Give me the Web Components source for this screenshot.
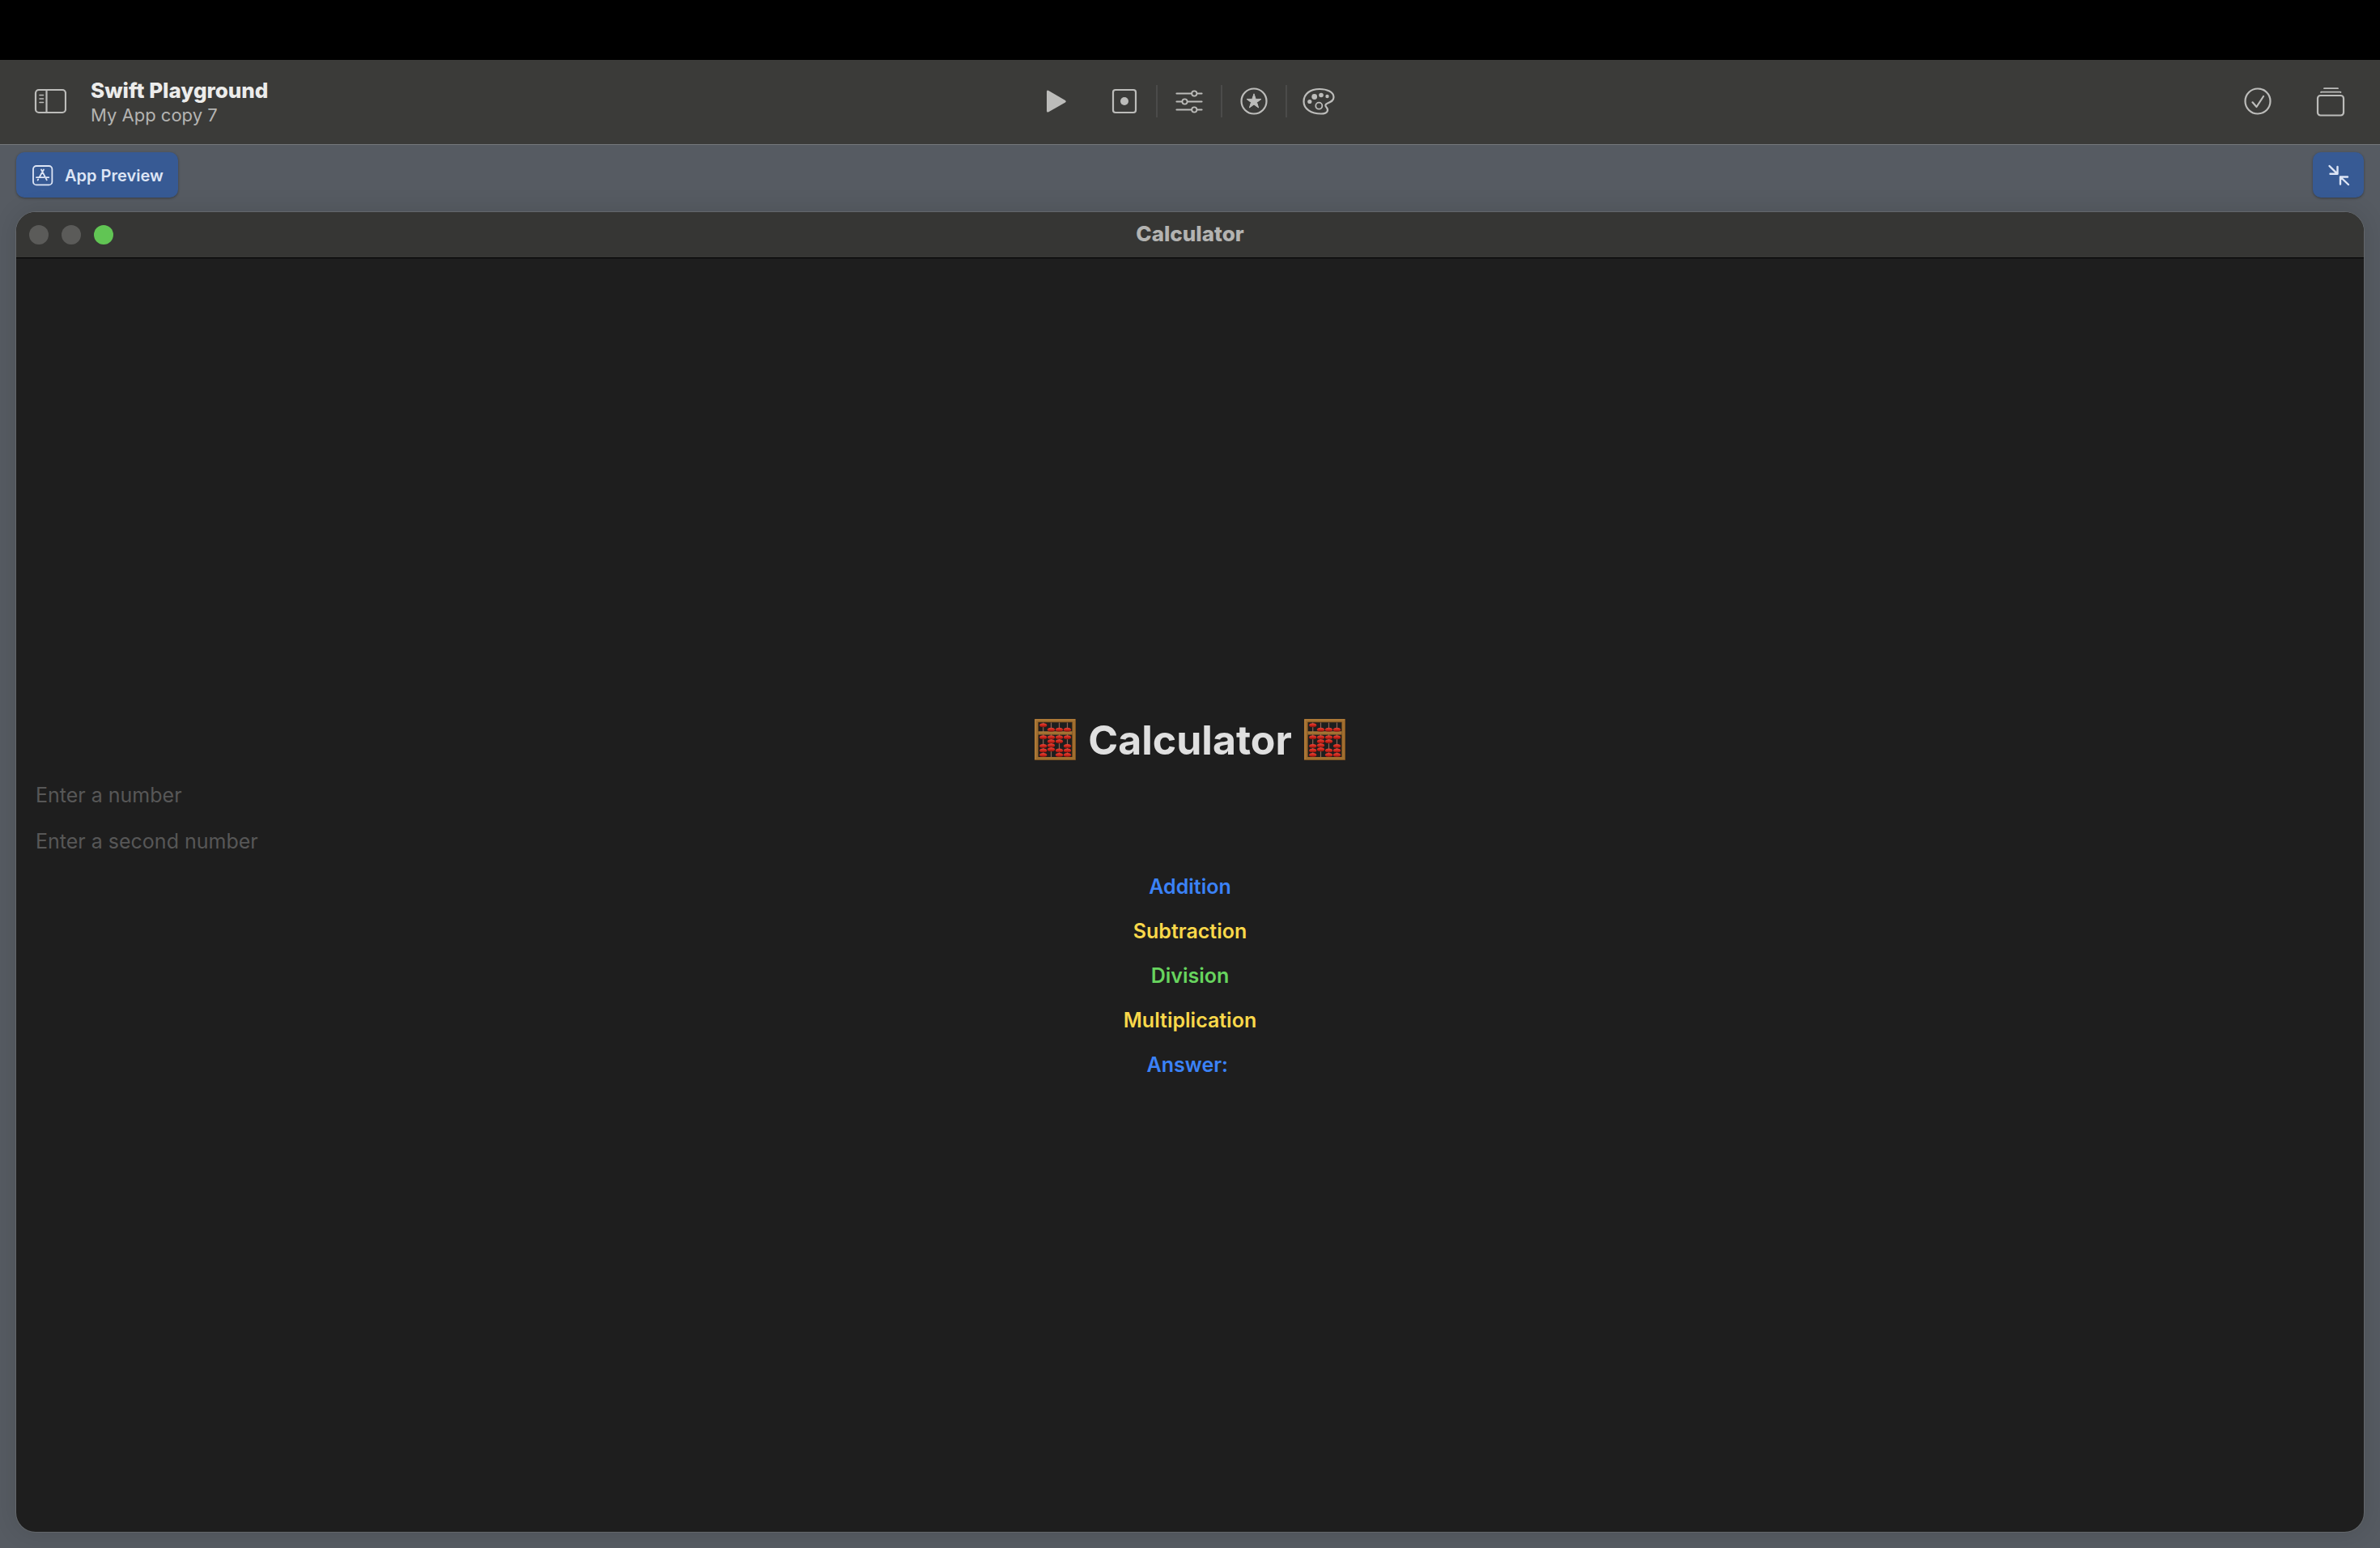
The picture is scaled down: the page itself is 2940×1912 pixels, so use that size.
<!DOCTYPE html>
<html lang="en">
<head>
<meta charset="utf-8">
<title>Swift Playground</title>
<style>
  html, body { margin: 0; background: #565b62; }
  body { font-family: Inter, "Liberation Sans", sans-serif; }
</style>
</head>
<body>
<playground-app></playground-app>

<template id="t-app">
  <style>
    :host { display: flex; flex-direction: column; min-height: 100vh; background: #565b62; }
    .menubar { height: 74px; background: #000; }
    app-window { flex: 1; margin: 0 20px 20px; }
  </style>
  <div class="menubar"></div>
  <app-toolbar heading="Swift Playground" subheading="My App copy 7"></app-toolbar>
  <preview-bar>App Preview</preview-bar>
  <app-window heading="Calculator"><calculator-view></calculator-view></app-window>
</template>

<template id="t-toolbar">
  <style>
    :host { display: grid; grid-template-columns: 1fr auto 1fr; align-items: center; height: 102px; padding-bottom: 2px; background: #3b3b39; border-bottom: 1px solid #75787b; color: #bcbcba; }
    .start { display: flex; align-items: center; gap: 11px; padding-left: 25px; }
    .end { display: flex; justify-content: flex-end; padding-right: 15px; }
    .titles { display: flex; flex-direction: column; }
    h1, p { margin: 0; }
    h1 { font-size: 26px; line-height: 34px; font-weight: 800; color: #ececeb; }
    p { font-size: 22px; line-height: 26px; color: #b4b4b2; }
    .tools { display: flex; }
    tool-button { width: 80px; }
    .start tool-button { width: 76px; }
    .end tool-button { width: 90px; }
    .ruled { --rule: #4b4b4a; }
  </style>
  <div class="start">
    <tool-button label="Toggle sidebar">
      <svg width="40" height="32" viewBox="0 0 40 32" fill="none" stroke="currentColor" stroke-width="2.200">
        <rect x="2" y="2" width="37" height="28" rx="4"/><path d="M15.500 2v28"/><path d="M7 8.500h4.500M7 13h4.500M7 17.500h4.500" stroke-width="1.600" stroke-linecap="round"/>
      </svg>
    </tool-button>
    <div class="titles"><h1></h1><p></p></div>
  </div>
  <div class="tools">
    <tool-button label="Run">
      <svg width="38" height="36" viewBox="0 0 38 36" fill="currentColor"><path d="M3 6.200Q3 3.800 5.400 5L26 17Q27.800 18.200 26 19.400L5.400 31.200Q3 32.400 3 30Z"/></svg>
    </tool-button>
    <tool-button class="ruled" label="Record">
      <svg width="36" height="36" viewBox="0 0 36 36"><rect x="4" y="4" width="28" height="28" rx="3" fill="none" stroke="currentColor" stroke-width="2.200"/><circle cx="18" cy="18" r="5" fill="currentColor"/></svg>
    </tool-button>
    <tool-button class="ruled" label="Settings">
      <svg width="36" height="36" viewBox="0 0 36 36" fill="none" stroke="currentColor" stroke-width="2.200" stroke-linecap="round">
        <path d="M2.500 8.500H21M28 8.500H33.500M2.500 18.500H9M16 18.500H33.500M2.500 28.500H21M28 28.500H33.500"/>
        <g stroke-width="1.800"><circle cx="24.300" cy="8.500" r="3.100"/><circle cx="12.500" cy="18.500" r="3.100"/><circle cx="24.300" cy="28.500" r="3.100"/></g>
      </svg>
    </tool-button>
    <tool-button class="ruled" label="Favourites">
      <svg width="36" height="36" viewBox="0 0 36 36"><circle cx="18" cy="18" r="15.500" fill="none" stroke="currentColor" stroke-width="2.200"/><path fill="currentColor" stroke="currentColor" stroke-linejoin="round" d="M18 8.800L20.200 15.400H27L21.500 19.400L23.600 26L18 22L12.400 26L14.500 19.400L9 15.400H15.800Z"/></svg>
    </tool-button>
    <tool-button label="Colours">
      <svg width="42" height="36" viewBox="0 0 42 36"><path fill="none" stroke="currentColor" stroke-width="2.200" d="M22 3C31 3 39.500 6.500 39.500 13C39.500 17.500 36 19 32 20.500C29 21.600 28.600 23.500 30.500 25.500C33 28.200 33.200 33.500 24 33.500C11.500 33.500 2.500 27.500 2.500 18.500C2.500 8.500 11 3 22 3Z"/><g fill="currentColor"><circle cx="9.800" cy="18.500" r="2.600"/><circle cx="15.700" cy="12.500" r="3.400"/><circle cx="24" cy="10.500" r="2.800"/><circle cx="31.500" cy="12" r="2.200"/></g><circle cx="21.300" cy="23.700" r="4" fill="none" stroke="currentColor" stroke-width="1.800"/></svg>
    </tool-button>
  </div>
  <div class="end">
    <tool-button label="Check">
      <svg width="36" height="36" viewBox="0 0 36 36" fill="none" stroke="currentColor" stroke-width="2.200" stroke-linecap="round" stroke-linejoin="round"><circle cx="18" cy="18" r="15.500"/><path d="M11.500 19.300L16.500 25L25 12"/></svg>
    </tool-button>
    <tool-button label="Library">
      <svg width="36" height="38" viewBox="0 0 36 38" fill="none" stroke="currentColor" stroke-width="2.200"><rect x="2" y="12" width="32" height="24.500" rx="3.500"/><path d="M6 8L6.500 7.600H30L30.500 8M10 3.200H27" stroke-linecap="round" stroke-width="1.800"/></svg>
    </tool-button>
  </div>
</template>

<template id="t-tool">
  <style>
    :host { display: block; }
    button { box-sizing: border-box; display: flex; align-items: center; justify-content: center; width: 100%; height: 40px; margin: 0; padding: 0; border: 0; border-right: 2px solid var(--rule, transparent); background: none; color: inherit; }
    ::slotted(svg) { display: block; flex: none; }
  </style>
  <button><slot></slot></button>
</template>

<template id="t-preview">
  <style>
    :host { display: flex; justify-content: space-between; padding: 9px 20px 18px; }
    button { display: flex; align-items: center; justify-content: center; gap: 14px; height: 56px; margin: 0; border: 0; border-radius: 10px; background: #375a94; color: #dde5f5; font: 600 20px/28px Inter, "Liberation Sans", sans-serif; box-shadow: 0 1px 3px rgba(0, 0, 0, .35); }
    .label { padding: 2px 18px 0 19px; }
    .shrink { width: 63px; padding: 0; }
    svg { display: block; }
  </style>
  <button class="label">
    <svg width="27" height="27" viewBox="0 0 27 27" fill="none" stroke="currentColor" stroke-width="1.800" stroke-linecap="round"><rect x="2" y="1" width="23.400" height="23.400" rx="4"/><path d="M12 5.500L18.800 18.300M15 5.500L9.600 15M6 15.200H15.200M18.400 15.200H21.200M8.200 17.500L7.600 18.500"/></svg>
    <span><slot></slot></span>
  </button>
  <button class="shrink" aria-label="Exit full screen">
    <svg width="28" height="28" viewBox="0 0 28 28" fill="none" stroke="currentColor" stroke-width="2.400" stroke-linecap="round" stroke-linejoin="round"><path d="M2.500 3L12.500 12.800M12.500 4V12.800H3.500M26 26L16 16.500M16 25.500V16.500H25"/></svg>
  </button>
</template>

<template id="t-window">
  <style>
    :host { display: flex; flex-direction: column; overflow: hidden; border-radius: 24px; background: #1e1e1e; box-shadow: 0 0 0 1px #63676b, 0 0 30px rgba(0, 0, 0, .12); }
    header { display: grid; grid-template-columns: 1fr auto 1fr; align-items: center; height: 56px; padding: 0 16px; background: #363634; border-bottom: 1px solid #000; }
    .lights { display: flex; gap: 16px; }
    button { width: 24px; height: 24px; padding: 0; border: 0; border-radius: 50%; background: #5b5b59; }
    .zoom { background: #61c554; }
    h2 { margin: 0; padding-bottom: 2px; font-size: 26px; line-height: 32px; font-weight: 800; color: #b3b3b1; }
    ::slotted(*) { flex: 1; }
  </style>
  <header>
    <div class="lights"><button aria-label="Close"></button><button aria-label="Minimise"></button><button class="zoom" aria-label="Zoom"></button></div>
    <h2></h2>
  </header>
  <slot></slot>
</template>

<template id="t-calculator">
  <style>
    :host { display: flex; flex-direction: column; justify-content: center; align-items: center; gap: 16px; padding: 5px 24px 0; font-size: 25px; line-height: 39px; }
    h1 { display: flex; align-items: center; gap: 15px; margin: 0; font-size: 50px; line-height: 64px; font-weight: 700; color: #dfdfdf; }
    input { box-sizing: border-box; width: 100%; height: 41px; margin: 0; padding: 0; border: 0; outline: 0; background: none; color: #dfdfdf; font: inherit; }
    input::placeholder { color: #575757; opacity: 1; }
    button, output { margin: 0; padding: 0; border: 0; background: none; font: inherit; font-weight: 600; white-space: pre; }
    .blue { color: #3b82f7; }
    .yellow { color: #f9d84a; }
    .green { color: #67d45e; }
  </style>
  <h1><abacus-icon></abacus-icon><span>Calculator</span><abacus-icon></abacus-icon></h1>
  <input type="text" aria-label="Enter a number" placeholder="Enter a number">
  <input type="text" aria-label="Enter a second number" placeholder="Enter a second number">
  <button class="blue">Addition</button>
  <button class="yellow">Subtraction</button>
  <button class="green">Division</button>
  <button class="yellow">Multiplication</button>
  <output class="blue">Answer: </output>
</template>

<template id="t-abacus">
  <style>
    :host { display: block; }
    svg { display: block; }
  </style>
  <svg width="51" height="51" viewBox="0 0 51 51" role="img" aria-label="Abacus">
    <defs><linearGradient id="bead" x1="0" y1="0" x2="0" y2="1"><stop offset="0" stop-color="#e0483a"/><stop offset=".5" stop-color="#d3261b"/><stop offset="1" stop-color="#7d130d"/></linearGradient></defs>
    <path fill="#a06e2f" fill-rule="evenodd" d="M0 0H51V51H0ZM4.500 4V47H46.500V4Z"/>
    <path fill="none" stroke="#b98441" d="M1 1H50M1 1V50"/>
    <path fill="none" stroke="#6d451a" stroke-width=".7" d="M4.500 47V4H46.500V47M0 50.600H51M50.600 0V51"/>
    <path stroke="#8f6353" stroke-width="1.200" d="M10.700 4.500V47M20.500 4.500V47M30.500 4.500V47M40.500 4.500V47"/>
    <path fill="#a06e2f" d="M4.500 15.500H46.500V19.500H4.500Z"/>
    <path stroke="#b98441" stroke-width=".8" d="M4.500 16H46.500"/>
    <g id="beads" fill="url(#bead)"></g>
  </svg>
</template>

<script>
  const stamp = (host, id) => {
    const root = host.attachShadow({ mode: 'open' });
    root.append(document.getElementById(id).content.cloneNode(true));
    return root;
  };

  customElements.define('abacus-icon', class extends HTMLElement {
    constructor() {
      super();
      const group = stamp(this, 't-abacus').getElementById('beads');
      const columns = [
        [10.7, [7.7, 22.7, 33.5, 39, 44.5]],
        [20.5, [13.2, 22.7, 27.7, 32.7, 37.7]],
        [30.5, [13.2, 22.7, 27.7, 39, 44.5]],
        [40.5, [13.2, 22.7, 33.5, 39, 44.5]]
      ];
      for (const [x, rows] of columns) for (const y of rows) {
        const bead = document.createElementNS('http://www.w3.org/2000/svg', 'ellipse');
        bead.setAttribute('cx', x);
        bead.setAttribute('cy', y);
        bead.setAttribute('rx', 4.6);
        bead.setAttribute('ry', 2.5);
        group.append(bead);
      }
    }
  });

  customElements.define('tool-button', class extends HTMLElement {
    constructor() {
      super();
      this.root = stamp(this, 't-tool');
    }
    connectedCallback() {
      this.root.querySelector('button').setAttribute('aria-label', this.getAttribute('label'));
    }
  });

  customElements.define('app-toolbar', class extends HTMLElement {
    constructor() {
      super();
      this.root = stamp(this, 't-toolbar');
    }
    connectedCallback() {
      this.root.querySelector('h1').textContent = this.getAttribute('heading');
      this.root.querySelector('p').textContent = this.getAttribute('subheading');
    }
  });

  customElements.define('preview-bar', class extends HTMLElement {
    constructor() {
      super();
      stamp(this, 't-preview');
    }
  });

  customElements.define('calculator-view', class extends HTMLElement {
    constructor() {
      super();
      stamp(this, 't-calculator');
    }
  });

  customElements.define('app-window', class extends HTMLElement {
    constructor() {
      super();
      this.root = stamp(this, 't-window');
    }
    connectedCallback() {
      this.root.querySelector('h2').textContent = this.getAttribute('heading');
    }
  });

  customElements.define('playground-app', class extends HTMLElement {
    constructor() {
      super();
      stamp(this, 't-app');
    }
  });
</script>
</body>
</html>
